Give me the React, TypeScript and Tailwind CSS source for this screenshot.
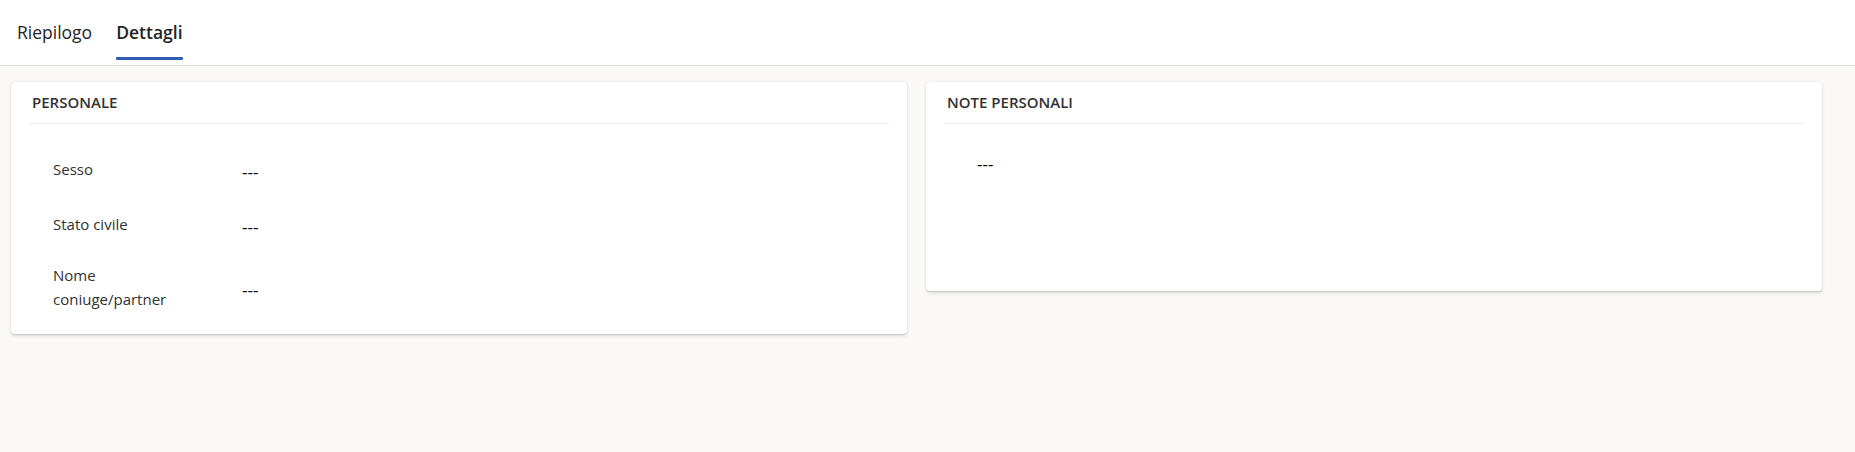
import React from "react";

const font = { fontFamily: '"Open Sans", "Noto Sans", sans-serif' };

function Tab({ label, active }: { label: string; active?: boolean }) {
  return (
    <div className="flex flex-col px-[12px]">
      <span
        className={
          "text-[17.5px] leading-[24px] text-[#242424] " +
          (active ? "font-semibold" : "font-normal")
        }
      >
        {label}
      </span>
      <div
        className={
          "mt-[13px] mb-[5px] h-[3px] rounded-[1px] " +
          (active ? "bg-[#2f5fb3]" : "bg-transparent")
        }
      />
    </div>
  );
}

function CardHeader({ title }: { title: string }) {
  return (
    <div className="mx-[18px] border-b border-[#edebe9] pt-[10px] pb-[11px]">
      <h2 className="pl-[3px] text-[15px] leading-[20px] font-semibold text-[#323130]">
        {title}
      </h2>
    </div>
  );
}

function FieldRow({ label, value }: { label: string; value: string }) {
  return (
    <div className="flex min-h-[55px] items-center py-[12px] pl-[24px]">
      <div className="w-[189px] shrink-0 pr-[40px] text-[15px] leading-[24px] text-[#323130]">
        {label}
      </div>
      <div className="pt-[6px] text-[17px] leading-[24px] font-medium text-[#000000]">{value}</div>
    </div>
  );
}

export default function App() {
  return (
    <div style={font} className="min-h-[452px] w-full bg-[#faf9f8]">
      <div className="flex h-[66px] items-end border-b border-[#e1dfdd] bg-white pl-[5px]">
        <Tab label="Riepilogo" />
        <Tab label="Dettagli" active />
      </div>
      <div className="flex items-start gap-[19px] pt-[16px] pl-[11px] pr-[33px]">
        <section className="flex-1 rounded-[4px] bg-white shadow-[0_1.6px_3.6px_rgba(0,0,0,0.13),0_0.3px_0.9px_rgba(0,0,0,0.11)]">
          <CardHeader title="PERSONALE" />
          <div className="mx-[18px] pt-[17px] pb-[11px]">
            <FieldRow label="Sesso" value="---" />
            <FieldRow label="Stato civile" value="---" />
            <FieldRow label="Nome coniuge/partner" value="---" />
          </div>
        </section>
        <section className="flex-1 rounded-[4px] bg-white shadow-[0_1.6px_3.6px_rgba(0,0,0,0.13),0_0.3px_0.9px_rgba(0,0,0,0.11)]">
          <CardHeader title="NOTE PERSONALI" />
          <div className="mx-[18px] h-[167px] pt-[28px] pl-[33px]">
            <div className="text-[17px] leading-[24px] font-medium text-[#000000]">---</div>
          </div>
        </section>
      </div>
    </div>
  );
}
